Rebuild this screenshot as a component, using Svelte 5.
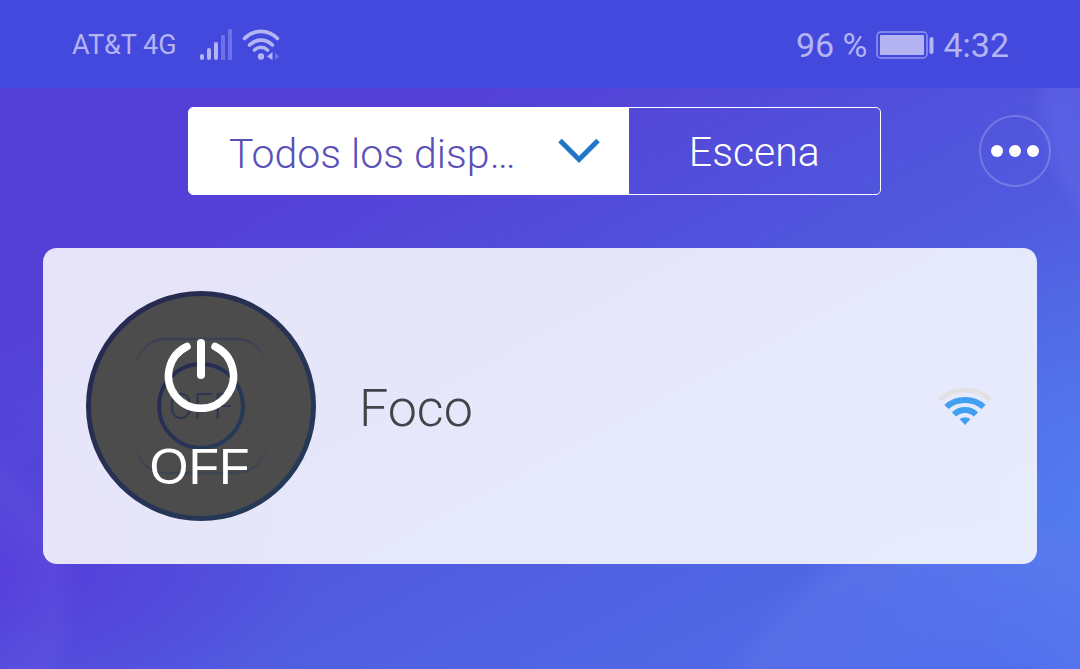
<script lang="ts">
  let filter = $state('todos')
  let on = $state(false)

  const network = 'AT&T 4G'
  const battery = 96
  const time = '4:32'
  const device = { name: 'Foco', signal: 2 }

  function toggle() {
    on = !on
  }
</script>

<div class="app">
  <div class="status-bar">
    <div class="status-left">
      <span class="network">{network}</span>
      <svg class="bars" viewBox="0 0 33 32" aria-hidden="true">
        <rect x="0" y="25" width="4" height="6" rx="2" />
        <rect x="7" y="19" width="4" height="12" rx="2" />
        <rect x="14" y="13" width="4" height="18" rx="2" />
        <rect class="faint" x="21" y="6" width="4" height="25" rx="1" />
        <rect class="faint" x="28" y="0" width="4" height="31" rx="1" />
      </svg>
      <svg class="status-wifi" viewBox="0 0 38 32" aria-hidden="true">
        <g fill="none" stroke="currentColor" stroke-width="3.6" stroke-linecap="round">
          <path d="M2.5 9.5C12 0 26 0 35.5 9.5" />
          <path d="M7.5 16C14.5 9.5 23.5 9.5 30.5 16" />
          <path d="M12.5 21C16.5 17.5 21.5 17.5 25.5 21" />
        </g>
        <circle cx="19" cy="27.5" r="3.2" fill="currentColor" />
        <path d="M30.5 23V31L25 27.5Z" fill="currentColor" />
        <path class="faint" d="M33 23.5V31L37.5 27.5Z" />
      </svg>
    </div>
    <div class="status-right">
      <span>{battery} %</span>
      <svg class="battery" viewBox="0 0 58 28" aria-hidden="true">
        <rect class="battery-case" x="1" y="1" width="50" height="26" rx="4" />
        <rect x="4" y="4" width="44" height="20" rx="1" fill="currentColor" />
        <rect x="53.5" y="6" width="4" height="17" rx="2" fill="currentColor" />
      </svg>
      <span>{time}</span>
    </div>
  </div>

  <header class="header">
    <div class="tabs">
      <div class="filter">
        <select aria-label="Dispositivos" bind:value={filter}>
          <option value="todos">Todos los disp…</option>
        </select>
        <svg class="chevron" viewBox="0 0 42 26" aria-hidden="true">
          <path d="M2 2.5L21 21.5L40 2.5" />
        </svg>
      </div>
      <button class="scene" type="button">Escena</button>
    </div>
    <button class="more" type="button" aria-label="Más">
      <svg viewBox="0 0 50 12" aria-hidden="true">
        <circle cx="7" cy="6" r="6" />
        <circle cx="25" cy="6" r="6" />
        <circle cx="43" cy="6" r="6" />
      </svg>
    </button>
  </header>

  <main>
    <article class="card">
      <button class="power" type="button" aria-pressed={on} onclick={toggle}>
        <svg class="socket" viewBox="0 0 230 230" aria-hidden="true">
          <defs>
            <linearGradient id="ring" x1="0" y1="0" x2="1" y2="1">
              <stop offset="0" stop-color="#28274f" />
              <stop offset="1" stop-color="#253d59" />
            </linearGradient>
            <linearGradient id="frame-top" x1="0" y1="0" x2="0" y2="1">
              <stop offset="0" stop-color="#3c4053" />
              <stop offset="1" stop-color="#4a4a4e" />
            </linearGradient>
            <linearGradient id="frame-bottom" x1="0" y1="1" x2="0" y2="0">
              <stop offset="0" stop-color="#3c4453" />
              <stop offset="1" stop-color="#4a4a4e" />
            </linearGradient>
          </defs>
          <circle cx="115" cy="115" r="112.5" fill="#4c4c4d" stroke="url(#ring)" stroke-width="5" />
          <g fill="none" stroke-width="2.5">
            <path d="M50 74C53 58 64 48 80 48H150C166 48 177 58 180 74" stroke="url(#frame-top)" />
            <path d="M50 156C53 172 64 182 80 182H150C166 182 177 172 180 156" stroke="url(#frame-bottom)" />
          </g>
          <circle cx="115" cy="115" r="42" fill="none" stroke="url(#ring)" stroke-width="4" />
          <text x="115" y="128" text-anchor="middle">OFF</text>
          <g fill="none" stroke="#fff" stroke-width="7.5" stroke-linecap="round">
            <path d="M101 55.5A32.5 32.5 0 1 0 129 55.5" />
            <path d="M115 52V84" stroke-width="8" />
          </g>
        </svg>
        <span class="power-label">{on ? 'ON' : 'OFF'}</span>
      </button>
      <h2 class="name">{device.name}</h2>
      <svg class="signal" viewBox="0 0 54 38" aria-hidden="true">
        <g fill="none" stroke-width="6">
          <path d="M2 13C15 -0.5 39 -0.5 52 13" stroke="#e2e1e4" stroke-width="5" />
          <path d="M8.5 20C18 10.5 36 10.5 45.5 20" stroke={device.signal > 1 ? '#42a0f0' : '#e2e1e4'} />
          <path d="M16 27.5C22 21.5 32 21.5 38 27.5" stroke="#42a0f0" />
        </g>
        <path d="M21.5 32Q27 28.5 32.5 32L27 38Z" fill="#42a0f0" />
      </svg>
    </article>
  </main>
</div>

<style>
  :global(body) {
    margin: 0;
  }

  .app {
    min-height: 100vh;
    font-family: Roboto, 'Liberation Sans', sans-serif;
    background:
      radial-gradient(circle at 91% 120%, rgba(76, 102, 238, 0.8) 0, rgba(100, 120, 235, 0.35) 265px, transparent 290px),
      radial-gradient(circle at 114% 14%, rgba(110, 115, 240, 0.2) 0, rgba(110, 115, 240, 0.3) 180px, transparent 200px),
      radial-gradient(circle at -10% 90%, rgba(100, 85, 225, 0) 90px, rgba(108, 94, 226, 0.25) 164px, transparent 186px),
      radial-gradient(circle at 104% 78%, rgba(84, 134, 245, 0.7) 0, transparent 320px),
      radial-gradient(ellipse at 0% 85%, rgba(86, 58, 218, 0.9) 0, transparent 320px),
      linear-gradient(152deg, #5640d6 0%, #5440d6 28%, #5153dc 50%, #5066e4 78%, #5070ea 100%);
  }

  .status-bar {
    display: flex;
    align-items: center;
    justify-content: space-between;
    height: 88px;
    padding: 2px 71px 0 72px;
    box-sizing: border-box;
    background: #4249dc;
    color: #b4b4f3;
  }

  .status-left,
  .status-right {
    display: flex;
    align-items: center;
    gap: 9px;
  }

  .network {
    font-size: 27px;
    margin-right: 14px;
  }

  .status-right {
    font-size: 34px;
  }

  .bars {
    width: 33px;
    height: 32px;
    fill: currentColor;
  }

  .faint {
    fill: #6e72e6;
  }

  .status-wifi {
    width: 38px;
    height: 32px;
  }

  .battery {
    width: 58px;
    height: 28px;
  }

  .battery-case {
    fill: none;
    stroke: #9495ee;
    stroke-width: 1.5;
  }

  .header {
    display: flex;
    align-items: center;
    gap: 98px;
    padding: 19px 29px 53px 188px;
  }

  .tabs {
    display: grid;
    grid-template-columns: 7fr 4fr;
    flex: 1;
    height: 88px;
    box-sizing: border-box;
    border: 1px solid #fff;
    border-radius: 5px;
    overflow: hidden;
  }

  .filter {
    display: flex;
    align-items: center;
    padding-right: 29px;
    background: #fff;
  }

  select {
    flex: 1;
    min-width: 0;
    height: 100%;
    padding: 6px 0 0 40px;
    border: 0;
    background: transparent;
    color: #5a50b8;
    font-family: inherit;
    font-size: 41px;
    font-weight: 300;
    appearance: none;
    outline: none;
  }

  .chevron {
    width: 42px;
    height: 26px;
    fill: none;
    stroke: #2176ca;
    stroke-width: 5;
    pointer-events: none;
  }

  .scene {
    padding: 2px 0 0;
    border: 0;
    background: transparent;
    color: #fff;
    font-family: inherit;
    font-size: 41px;
    font-weight: 300;
  }

  .more {
    display: flex;
    flex: none;
    align-items: center;
    justify-content: center;
    width: 72px;
    height: 72px;
    padding: 0;
    border: 2px solid rgba(255, 255, 255, 0.2);
    border-radius: 50%;
    background: transparent;
  }

  .more svg {
    width: 50px;
    height: 12px;
    fill: #fff;
    flex: none;
  }

  main {
    padding: 0 43px;
  }

  .card {
    display: flex;
    align-items: center;
    gap: 43px;
    padding: 43px 45px 43px 43px;
    border-radius: 14px;
    background: rgba(255, 255, 255, 0.86);
  }

  .power {
    display: grid;
    flex: none;
    width: 230px;
    height: 230px;
    padding: 0;
    border: 0;
    border-radius: 50%;
    background: transparent;
    color: #fff;
    cursor: pointer;
  }

  .socket,
  .power-label {
    grid-area: 1 / 1;
  }

  .socket {
    width: 230px;
    height: 230px;
  }

  .socket text {
    fill: #303650;
    font-family: Roboto, sans-serif;
    font-size: 36px;
    font-weight: 300;
  }

  .power-label {
    align-self: end;
    padding: 0 3px 24px 0;
    font-family: 'Liberation Sans', Arial, sans-serif;
    font-size: 50px;
    line-height: 60px;
  }

  .name {
    flex: 1;
    margin: 0;
    padding-top: 4px;
    color: #444448;
    font-size: 52px;
    font-weight: 300;
  }

  .signal {
    flex: none;
    width: 54px;
    height: 38px;
  }
</style>
